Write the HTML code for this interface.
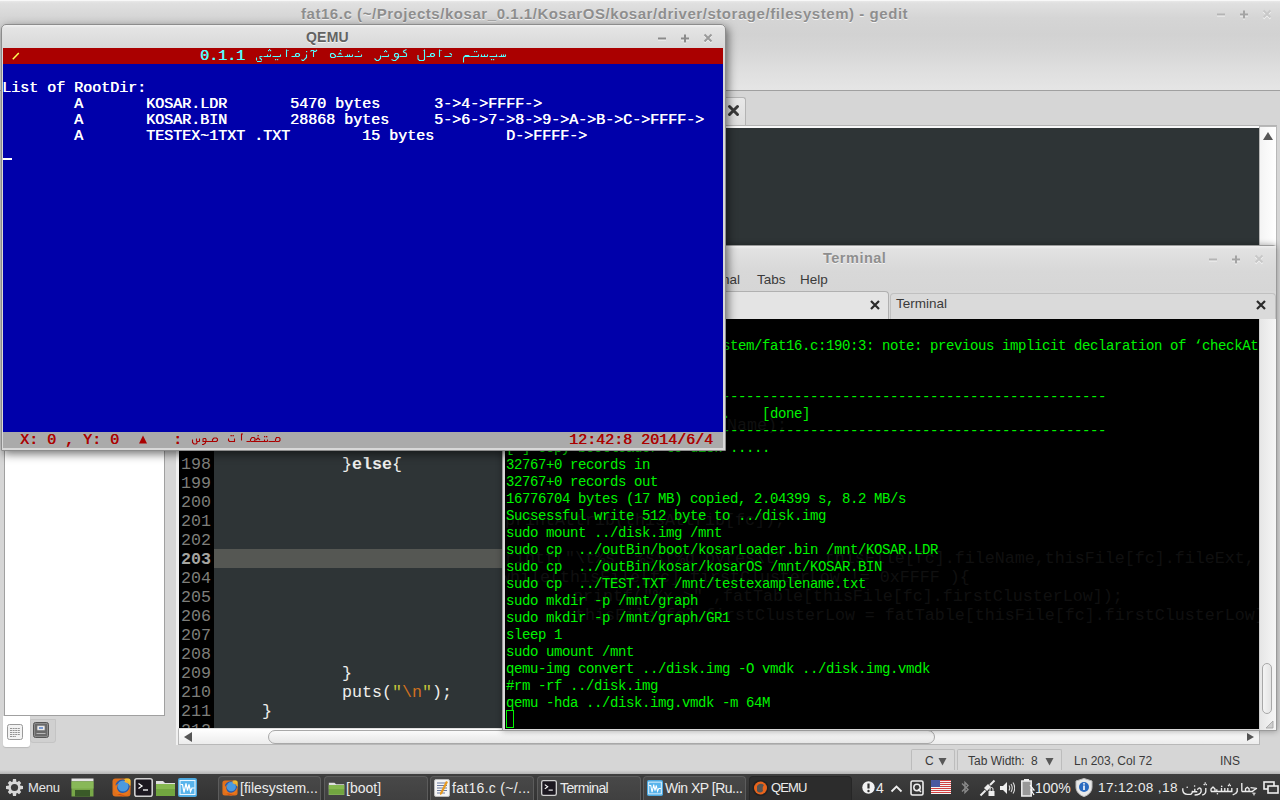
<!DOCTYPE html>
<html><head><meta charset="utf-8">
<style>
*{margin:0;padding:0;box-sizing:border-box}
html,body{width:1280px;height:800px;overflow:hidden;background:#d6d6d6;font-family:"Liberation Sans",sans-serif}
.a{position:absolute}
.mono{font-family:"Liberation Mono",monospace}
/* gedit */
#gtitle{left:0;top:0;width:1280px;height:91px;background:linear-gradient(#ededed 0px,#e0e0e0 3px,#d5d5d5 18px,#d2d2d2 34px,#d6d6d6 50px,#dedede 68px,#e5e5e5 89px);border-bottom:1px solid #a0a0a0}
#gtitletxt{left:301px;top:5px;font-weight:bold;font-size:15px;letter-spacing:0.55px;color:#8e8e8e;white-space:nowrap;text-shadow:0 1px 0 #f4f4f4}
.wc{color:#a8a8a8;font-size:15px;font-weight:bold}
#tabbar{left:0;top:91px;width:1280px;height:36px;background:#d6d6d6}
#gtab{left:600px;top:97px;width:146px;height:31px;background:linear-gradient(#e8e8e8,#dcdcdc);border:1px solid #b4b4b4;border-bottom:none;border-radius:3px 3px 0 0}
#editor{left:178px;top:126px;width:1082px;height:602px;background:#2e3436;overflow:hidden;border-top:2px solid #f8f8f8;border-left:1px solid #f0f0f0}
#gutter{left:0;top:0;width:35px;height:602px;background:#000}
.ln{position:absolute;left:0;width:32px;text-align:right;font-family:"Liberation Mono",monospace;font-size:16.67px;line-height:19px;height:19px;color:#7e7e7a}
.ln.cur{font-weight:bold;color:#a4a4a0}
#curline{left:35px;top:421px;width:1050px;height:19px;background:#555753}
.cl{position:absolute;font-family:"Liberation Mono",monospace;font-size:16.67px;line-height:19px;height:19px;color:#eeeeec;white-space:pre}
#vscroll{left:1259px;top:126px;width:18px;height:603px;background:linear-gradient(90deg,#f4f4f4,#ffffff);border:1px solid #b8b8b8}
#hscroll{left:178px;top:728px;width:1082px;height:17px;background:linear-gradient(#ffffff,#ececec);border:1px solid #b8b8b8;border-top:1px solid #e0e0e0}
#hthumb{left:89px;top:1px;width:667px;height:14px;border:1px solid #a8a8a8;border-radius:7px;background:linear-gradient(#fafafa,#e6e6e6)}
#status{left:0;top:745px;width:1280px;height:28px;background:#d6d6d6}
.sbox{position:absolute;top:749px;height:24px;border:1px solid #bcbcbc;border-bottom:none;background:#d8d8d8;border-radius:2px 2px 0 0}
.stxt{position:absolute;top:754px;font-size:12px;color:#3a3a3a;white-space:nowrap}
#side{left:4px;top:40px;width:161px;height:676px;background:#fff;border:1px solid #a0a0a0}
#sidesep{left:176px;top:451px;width:2px;height:294px;background:#f0f0f0}
/* taskbar */
#taskbar{left:0;top:774px;width:1280px;height:26px;background:linear-gradient(#3e3e3e 0,#3c3c3c 4px,#333 100%);color:#e8e8e8;font-size:13.5px}

/* terminal */
#term{left:502px;top:245px;width:775px;height:486px;background:#d8d8d8;border:1px solid #9a9a9a;border-radius:4px 4px 0 0;box-shadow:0 0 6px rgba(0,0,0,.35)}
#ttitle{left:0;top:0;width:773px;height:25px;background:linear-gradient(#f0f0f0 0,#e2e2e2 3px,#d8d8d8 25px)}
#tmenu{left:0;top:25px;width:773px;height:20px;background:linear-gradient(#d8d8d8,#d6d6d6)}
.mi{position:absolute;top:26px;font-size:13.5px;color:#3a3a3a;white-space:nowrap}
#ttabs{left:0;top:45px;width:773px;height:29px;background:#d8d8d8}
#tcontent{left:2px;top:73px;width:754px;height:410px;background:#000;overflow:hidden}
.gl{position:absolute;font-family:"Liberation Mono",monospace;font-size:16.67px;line-height:19px;height:19px;color:#101010;white-space:pre}
.tl{position:absolute;left:1px;height:17px;line-height:17px;padding-top:2px;font-family:"Liberation Mono",monospace;font-size:14px;letter-spacing:-0.4px;color:#00f400;white-space:pre}
#tscroll{left:756px;top:73px;width:17px;height:411px;background:linear-gradient(90deg,#e6e6e6,#f6f6f6);border-left:1px solid #d0d0d0}
/* qemu */
#qemu{left:1px;top:24px;width:725px;height:427px;background:linear-gradient(#f2f2f2 0,#e4e4e4 3px,#d8d8d8 23px);border:1px solid #8c8c8c;border-radius:5px 5px 0 0;box-shadow:2px 3px 10px rgba(0,0,0,.55)}
#qtitle{left:304px;top:4px;font-weight:bold;font-size:14px;letter-spacing:0.2px;color:#626262;text-shadow:0 1px 0 #f4f4f4}
#qscreen{left:1px;top:23px;width:720px;height:400px;background:#0000aa;overflow:hidden}
.ql{position:absolute;left:0;height:16px;line-height:16px;transform:translate(-1px,1px);font-family:"Liberation Mono",monospace;font-weight:normal;font-size:15px;color:#fff;white-space:pre;text-shadow:0.5px 0 0 currentColor}

.tb{position:absolute;top:776px;height:24px;border:1px solid #5c5c5c;border-bottom:none;border-radius:4px 4px 0 0;background:linear-gradient(#484848,#404040)}
.tbt{position:absolute;top:780px;font-size:14px;color:#ececec;white-space:nowrap}
</style></head>
<body>
<!-- GEDIT -->
<div id="gtitle" class="a"></div>
<div class="a" style="left:0;top:0;width:1280px;height:1px;background:#f8f8f8"></div>
<div id="gtitletxt" class="a">fat16.c (~/Projects/kosar_0.1.1/KosarOS/kosar/driver/storage/filesystem) - gedit</div>
<svg class="a" style="left:1213px;top:6px" width="64" height="16" viewBox="0 0 64 16"><g stroke="#f4f4f4" stroke-width="2" fill="none" transform="translate(0,1)"><path d="M4 8.5h8"/><path d="M27 8.5h8M31 4.5v8"/><path d="M50.5 4.5l7 7M57.5 4.5l-7 7"/></g><g stroke-width="2" fill="none"><path d="M4 8.5h8" stroke="#b4b4b4"/><path d="M27 8.5h8M31 4.5v8" stroke="#a4a4a4"/><path d="M50.5 4.5l7 7M57.5 4.5l-7 7" stroke="#c8c8c8"/></g></svg>
<div id="tabbar" class="a"></div>
<div id="gtab" class="a"></div>
<svg class="a" style="left:727px;top:104px" width="13" height="13" viewBox="0 0 13 13"><path d="M2.5 2.5l8 8M10.5 2.5l-8 8" stroke="#3a3a3a" stroke-width="3" stroke-linecap="round"/></svg>
<div id="side" class="a"></div>
<div id="sidesep" class="a"></div>
<div class="a" style="left:178px;top:125px;width:1099px;height:1px;background:#b4b4b4"></div>
<div id="editor" class="a">
 <div id="gutter" class="a">
<div class="ln" style="top:308px">197</div>
<div class="ln" style="top:327px">198</div>
<div class="ln" style="top:346px">199</div>
<div class="ln" style="top:365px">200</div>
<div class="ln" style="top:384px">201</div>
<div class="ln" style="top:403px">202</div>
<div class="ln cur" style="top:422px">203</div>
<div class="ln" style="top:441px">204</div>
<div class="ln" style="top:460px">205</div>
<div class="ln" style="top:479px">206</div>
<div class="ln" style="top:498px">207</div>
<div class="ln" style="top:517px">208</div>
<div class="ln" style="top:536px">209</div>
<div class="ln" style="top:555px">210</div>
<div class="ln" style="top:574px">211</div>
<div class="ln" style="top:593px">212</div>
 </div>
 <div id="curline" class="a"></div>
 <div class="cl" style="left:163px;top:327px">}<b>else</b>{</div>
 <div class="cl" style="left:163px;top:536px">}</div>
 <div class="cl" style="left:163px;top:555px">puts(<span style="color:#c4c43a">"</span><span style="color:#ce7020">\n</span><span style="color:#c4c43a">"</span>);</div>
 <div class="cl" style="left:83px;top:574px">}</div>
</div>
<div id="vscroll" class="a"></div>
<svg class="a" style="left:1262px;top:130px" width="12" height="12" viewBox="0 0 12 12"><path d="M1 10h10L6 2z" fill="#555"/></svg>
<div id="hscroll" class="a"><div id="hthumb" class="a"></div></div>
<svg class="a" style="left:182px;top:731px" width="12" height="12" viewBox="0 0 12 12"><path d="M10 1v10L2 6z" fill="#555"/></svg>
<svg class="a" style="left:1246px;top:732px" width="10" height="10" viewBox="0 0 10 10"><path d="M1 1v8l7-4z" fill="#555"/></svg>
<div id="status" class="a"></div>
<div class="sbox" style="left:911px;width:44px"></div>
<div class="sbox" style="left:957px;width:105px"></div>
<div class="stxt" style="left:925px">C</div>
<svg class="a" style="left:938px;top:757px" width="9" height="9" viewBox="0 0 9 9"><path d="M0.5 1h8L4.5 8.5z" fill="#585858"/></svg>
<div class="stxt" style="left:968px">Tab Width:</div><div class="stxt" style="left:1031px">8</div>
<svg class="a" style="left:1045px;top:757px" width="9" height="9" viewBox="0 0 9 9"><path d="M0.5 1h8L4.5 8.5z" fill="#585858"/></svg>
<div class="stxt" style="left:1074px">Ln 203, Col 72</div>
<div class="stxt" style="left:1220px">INS</div>
<!-- side panel tabs -->
<div class="a" style="left:3px;top:716px;width:27px;height:31px;background:#fff;border-radius:0 0 3px 3px;box-shadow:0 1px 1px #bbb"></div>
<div class="a" style="left:30px;top:719px;width:26px;height:24px;background:#d0d0d0;border:1px solid #c4c4c4;border-radius:0 0 3px 3px"></div>
<svg class="a" style="left:6px;top:723px" width="20" height="18" viewBox="0 0 20 18"><rect x="1.5" y="1.5" width="15" height="15" rx="2" fill="#f2f2f2" stroke="#9a9a9a"/><path d="M4 5.5h10M4 7.5h10M4 9.5h10M4 11.5h10M4 13.5h6" stroke="#6a6a6a" stroke-width="0.7" stroke-dasharray="2 0.6"/></svg>
<svg class="a" style="left:32px;top:721px" width="18" height="18" viewBox="0 0 18 18"><rect x="1.5" y="1.5" width="15" height="15" rx="2" fill="#8a8a8a" stroke="#555"/><rect x="3" y="3" width="12" height="12" fill="#6a6a6a"/><rect x="5" y="4.5" width="8" height="5" rx="1" fill="#e8e8e8" stroke="#777" stroke-width="0.6"/><rect x="7" y="6" width="4" height="2" fill="#7a9ad0"/><path d="M4.5 12.5h9" stroke="#ccc" stroke-width="0.8"/></svg>


<!-- TERMINAL -->
<div id="term" class="a">
 <div id="ttitle" class="a"></div>
 <div class="a" style="left:320px;top:4px;font-weight:bold;font-size:14.5px;letter-spacing:0.5px;color:#8e8e8e;text-shadow:0 1px 0 #f4f4f4">Terminal</div>
 <svg class="a" style="left:702px;top:5px" width="64" height="16" viewBox="0 0 64 16"><g stroke="#f4f4f4" stroke-width="2" fill="none" transform="translate(0,1)"><path d="M4 8.5h8"/><path d="M27 8.5h8M31 4.5v8"/><path d="M50.5 4.5l7 7M57.5 4.5l-7 7"/></g><g stroke-width="2" fill="none"><path d="M4 8.5h8" stroke="#b4b4b4"/><path d="M27 8.5h8M31 4.5v8" stroke="#a4a4a4"/><path d="M50.5 4.5l7 7M57.5 4.5l-7 7" stroke="#c8c8c8"/></g></svg>
 <div id="tmenu" class="a"></div>
 <div class="mi" style="left:10px">File</div>
 <div class="mi" style="left:50px">Edit</div>
 <div class="mi" style="left:90px">View</div>
 <div class="mi" style="left:135px">Search</div>
 <div class="mi" style="left:186px">Terminal</div>
 <div class="mi" style="left:254px">Tabs</div>
 <div class="mi" style="left:297px">Help</div>
 <div id="ttabs" class="a"></div>
 <div class="a" style="left:4px;top:45px;width:382px;height:29px;background:#e4e4e4;border:1px solid #b0b0b0;border-bottom:none;border-radius:4px 4px 0 0"></div>
 <div class="a" style="left:387px;top:47px;width:386px;height:27px;background:#dadada;border:1px solid #c0c0c0;border-bottom:none;border-radius:4px 4px 0 0"></div>
 <div class="a" style="left:393px;top:50px;font-size:13.5px;color:#3a3a3a">Terminal</div>
 <svg class="a" style="left:366px;top:53px" width="12" height="12" viewBox="0 0 12 12"><path d="M2 2l8 8M10 2l-8 8" stroke="#2a2a2a" stroke-width="2.2"/></svg>
 <svg class="a" style="left:752px;top:53px" width="12" height="12" viewBox="0 0 12 12"><path d="M2 2l8 8M10 2l-8 8" stroke="#2a2a2a" stroke-width="2.2"/></svg>
 <div id="tcontent" class="a">
<div class="gl" style="left:182px;top:97px">fileName);</div>
<div class="gl" style="left:0px;top:192px">printAttrib(thisAttrib[fc]);</div>
<div class="gl" style="left:-10px;top:230px">printf(&quot;\t%s  %s\t%d bytes\t&quot;,   thisFile[fc].fileName,thisFile[fc].fileExt,</div>
<div class="gl" style="left:-5px;top:249px">while(thisFile[fc].firstClusterLow != 0xFFFF ){</div>
<div class="gl" style="left:68px;top:268px">printf(&quot;%x-&gt;&quot; ,fatTable[thisFile[fc].firstClusterLow]);</div>
<div class="gl" style="left:70px;top:287px">thisFile[fc].firstClusterLow = fatTable[thisFile[fc].firstClusterLow];</div>
<div class="tl" style="top:17px">                           stem/fat16.c:190:3: note: previous implicit declaration of ‘checkAt</div>
<div class="tl" style="top:68px">---------------------------------------------------------------------------</div>
<div class="tl" style="top:85px">                           .    [done]</div>
<div class="tl" style="top:102px">---------------------------------------------------------------------------</div>
<div class="tl" style="top:119px">[*] Copy bootloader to disk .....</div>
<div class="tl" style="top:136px">32767+0 records in</div>
<div class="tl" style="top:153px">32767+0 records out</div>
<div class="tl" style="top:170px">16776704 bytes (17 MB) copied, 2.04399 s, 8.2 MB/s</div>
<div class="tl" style="top:187px">Sucsessful write 512 byte to ../disk.img</div>
<div class="tl" style="top:204px">sudo mount ../disk.img /mnt</div>
<div class="tl" style="top:221px">sudo cp  ../outBin/boot/kosarLoader.bin /mnt/KOSAR.LDR</div>
<div class="tl" style="top:238px">sudo cp  ../outBin/kosar/kosarOS /mnt/KOSAR.BIN</div>
<div class="tl" style="top:255px">sudo cp  ../TEST.TXT /mnt/testexamplename.txt</div>
<div class="tl" style="top:272px">sudo mkdir -p /mnt/graph</div>
<div class="tl" style="top:289px">sudo mkdir -p /mnt/graph/GR1</div>
<div class="tl" style="top:306px">sleep 1</div>
<div class="tl" style="top:323px">sudo umount /mnt</div>
<div class="tl" style="top:340px">qemu-img convert ../disk.img -O vmdk ../disk.img.vmdk</div>
<div class="tl" style="top:357px">#rm -rf ../disk.img</div>
<div class="tl" style="top:374px">qemu -hda ../disk.img.vmdk -m 64M</div>
 <div class="a" style="left:1px;top:391px;width:8px;height:18px;border:1px solid #00f400"></div>
 </div>
 <div id="tscroll" class="a"></div>
 <div class="a" style="left:759px;top:417px;width:10px;height:51px;border:1px solid #a8a8a8;border-radius:5px;background:linear-gradient(90deg,#f4f4f4,#e4e4e4)"></div>
 <svg class="a" style="left:762px;top:474px" width="9" height="9" viewBox="0 0 9 9"><path d="M8 1v7H1z" fill="#cfcfcf" stroke="#a0a0a0" stroke-width="0.8"/></svg>
</div>

<!-- QEMU -->
<div id="qemu" class="a">
 <div id="qtitle" class="a">QEMU</div>
 <svg class="a" style="left:652px;top:5px" width="64" height="16" viewBox="0 0 64 16"><g stroke="#f4f4f4" stroke-width="2" fill="none" transform="translate(0,1)"><path d="M4 8.5h8"/><path d="M27 8.5h8M31 4.5v8"/><path d="M50.5 4.5l7 7M57.5 4.5l-7 7"/></g><g stroke-width="2" fill="none"><path d="M4 8.5h8" stroke="#8a8a8a"/><path d="M27 8.5h8M31 4.5v8" stroke="#8a8a8a"/><path d="M50.5 4.5l7 7M57.5 4.5l-7 7" stroke="#9a9a9a"/></g></svg>
 <div id="qscreen" class="a">
  <div class="a" style="left:0;top:0;width:720px;height:16px;background:#aa0000"></div>
  <svg class="a" style="left:9px;top:0" width="9" height="16" viewBox="0 0 9 16"><path d="M0.8 11.2L6.8 5" stroke="#ffff55" stroke-width="1.5"/></svg>
  <div class="ql" style="left:198px;top:0;color:#55ffff">0.1.1</div>
<div class="ql" style="top:32px">List of RootDir:</div>
<div class="ql" style="top:48px">        A       KOSAR.LDR       5470 bytes      3-&gt;4-&gt;FFFF-&gt;</div>
<div class="ql" style="top:64px">        A       KOSAR.BIN       28868 bytes     5-&gt;6-&gt;7-&gt;8-&gt;9-&gt;A-&gt;B-&gt;C-&gt;FFFF-&gt;</div>
<div class="ql" style="top:80px">        A       TESTEX~1TXT .TXT        15 bytes        D-&gt;FFFF-&gt;</div>
  <div class="a" style="left:0;top:110px;width:9px;height:2px;background:#fff"></div>
  <div class="a" style="left:0;top:384px;width:720px;height:16px;background:#aaaaaa"></div>
  <div class="ql" style="left:0;top:384px;color:#aa0000">  X: 0 , Y: 0                                                  12:42:8 2014/6/4</div>
  <svg class="a" style="left:135px;top:384px" width="18" height="16" viewBox="0 0 18 16"><path d="M1 11.5h8L5 3.5z" fill="#aa0000"/></svg>
  <div class="ql" style="left:171px;top:384px;color:#aa0000">:</div>
 </div>
</div>

<div class="a" style="left:0;top:770px;width:1280px;height:4px;background:linear-gradient(#d6d6d6,#b4b4b4)"></div>
<div id="taskbar" class="a"></div>

<!-- PERSIAN -->
<svg class="a" style="left:0;top:48px" width="520" height="16" viewBox="0 0 520 16"><path d="M256.5 9.5v3 M257 13.5h4.5 M261.5 12.5v-1 l-2-2 M259.5 8.5h3 M263.5 8.5h7 M267.5 6.5v2 M270.5 6.5v2 M272.5 8.5h8 M280.5 6.5v2 M286.5 1.5v7.5 M287.5 2.5h1 M291.5 8.5h4 M295.5 6.5l1-1h2l1 1v1l-1 1h-2l-1-1z M306.5 6.5v3l-3 3h-1l-1-1 M313.5 3.5v5.5 M310.5 3.5l1-1h2l1 1h1l1.5-1.5 M330.5 5.5v3l1 1h3l1-1v-1l-2-2h-2l-1 1 M336.5 8.5h7 M338.5 6.5l1.5-1.5 1.5 1.5 M344.5 8.5h8 M347.5 6.5v2 M349.5 6.5v2 M352.5 6.5v2 M354.5 8.5h7 M361.5 6.5v2 M380.5 7.5v3l-2 2h-2l-2-2 M381.5 8.5h7 M388.5 6.5v2 M394.5 6.5l1-1h2l1 1v1.5l-1 1h-2l-1-1z M398.5 8.5v1l-3 3h-2l-2-1 M399.5 8.5h7 M406.5 5.5v3 M406.5 1.5l-3 1.5v1l3 1.5 M424.5 1.5v10l-1 1h-4l-1.5-1.5v-4 M423.5 2.5h1 M426.5 8.5h4 M430.5 6.5l1-1h2l1 1v1l-1 1h-2l-1-1z M439.5 1.5v7.5 M440.5 2.5h1 M444.5 8.5h3 M444.5 8.5h7 M451.5 7.5v-1l-1-1h-1 M463.5 9.5v5 M463.5 9.5l2-2h3l1 1h-5 M470.5 8.5h8 M478.5 6.5v2 M480.5 8.5h7 M481.5 6.5v2 M484.5 6.5v2 M487.5 6.5v2 M489.5 8.5h8 M496.5 6.5v2 M498.5 8.5h7 M501.5 6.5v2 M503.5 6.5v2 M505.5 6.5v2" stroke="#55ffff" stroke-width="1.1" fill="none"/><g fill="#55ffff"><rect x="268" y="2" width="1.2" height="1.2"/><rect x="269" y="1" width="1.2" height="1.2"/><rect x="270" y="2" width="1.2" height="1.2"/><rect x="275" y="11" width="1.2" height="1.2"/><rect x="277" y="11" width="1.2" height="1.2"/><rect x="306" y="3" width="1.2" height="1.2"/><rect x="340" y="2" width="1.2" height="1.2"/><rect x="358" y="3" width="1.2" height="1.2"/><rect x="384" y="3" width="1.2" height="1.2"/><rect x="385" y="2" width="1.2" height="1.2"/><rect x="386" y="3" width="1.2" height="1.2"/><rect x="474" y="3" width="1.2" height="1.2"/><rect x="476" y="3" width="1.2" height="1.2"/><rect x="491" y="11" width="1.2" height="1.2"/><rect x="493" y="11" width="1.2" height="1.2"/></g></svg>
<svg class="a" style="left:0;top:0" width="300" height="460" viewBox="0 0 300 460"><path d="M192.5 439.5v3l1.5 1.5h2l1-1v-2 M196.5 438.5v3 M197 441.5h2.5 M199.5 438.5v3 M203 439l1-0.5h1.5l0.5 1v2h-3z M205.5 441.5v1.5l-2 1.5h-1.5 M206.5 441.5h6 M212.5 441.5v-2l1.5-1.5h2.5l1 1v1.5l-1 1h-4 M228.5 438.5v2l1 1h5v-3 M241.5 433.5v7 M242 434h1 M246.5 441.5h4 M250.5 441.5v-2l1.5-2h2l1 1v2l-1 1h-3 M254.5 441.5h7 M256 440l2-2 2 2 M261.5 441.5h6 M264.5 439.5v2 M267.5 439.5v2 M268.5 441.5h7 M275.5 441.5v-2l1-2h2.5l1 1v2l-1 1h-3" stroke="#aa0000" stroke-width="1.1" fill="none"/><g fill="#aa0000"><rect x="230.5" y="435" width="1.3" height="1.3"/><rect x="232.5" y="435" width="1.3" height="1.3"/><rect x="257.5" y="435" width="1.3" height="1.3"/><rect x="264" y="436" width="1.3" height="1.3"/><rect x="266" y="436" width="1.3" height="1.3"/></g></svg>
<!-- TASKBAR CONTENT -->
<svg class="a" style="left:5px;top:778px" width="19" height="19" viewBox="0 0 19 19">
 <g fill="#d8d8d8"><circle cx="9.5" cy="9.5" r="6"/>
 <path d="M8 1h3l.5 3h-4zM8 18h3l.5-3h-4zM1 8v3l3 .5v-4zM18 8v3l-3 .5v-4z"/>
 <path d="M2.8 4.9l2.1-2.1 2.5 1.8-2.8 2.8zM16.2 14.1l-2.1 2.1-2.5-1.8 2.8-2.8zM4.9 16.2l-2.1-2.1 1.8-2.5 2.8 2.8zM14.1 2.8l2.1 2.1-1.8 2.5-2.8-2.8z"/></g>
 <circle cx="9.5" cy="9.5" r="3.6" fill="#3c3c3c"/>
</svg>
<div class="tbt" style="left:28px;color:#e6e6e6;font-size:13px;letter-spacing:-0.2px">Menu</div>
<svg class="a" style="left:71px;top:778px" width="23" height="19" viewBox="0 0 23 19">
 <rect x="0.5" y="0.5" width="22" height="3" fill="#e4e4e4"/>
 <rect x="0.5" y="3.5" width="22" height="15" fill="#78a848"/>
 <rect x="0.5" y="3.5" width="22" height="7" fill="#88b858"/>
 <rect x="4" y="12" width="15" height="6.5" fill="#3a5a28"/>
</svg>
<svg class="a" style="left:112px;top:778px" width="19" height="19" viewBox="0 0 19 19">
 <rect x="0.5" y="0.5" width="18" height="18" rx="3" fill="#e0701c"/><rect x="12" y="0.5" width="6.5" height="8" rx="2" fill="#f0c030"/>
 <circle cx="10.5" cy="9" r="7.5" fill="#2a5aa8"/>
 <circle cx="11" cy="8" r="5.5" fill="#4a9ae0"/>
 <path d="M2 4 Q0 12 5 16 Q10 20 15 17 Q19 13 18 8 Q17 14 11 15 Q6 15 5 10 Q5 7 7 6 Q4 6 4 8 Q3 6 2 4z" fill="#e8761c"/>
 <path d="M5 16 Q10 19 15 17 Q11 17.5 8 16z" fill="#d04a10"/>
 <path d="M13 1.5 Q17 3 18.5 8 Q16 4.5 12.5 4z" fill="#f8b030"/>
</svg>
<svg class="a" style="left:134px;top:778px" width="19" height="19" viewBox="0 0 19 19">
 <rect x="0.8" y="0.8" width="17.4" height="17.4" rx="2" fill="#1c1820" stroke="#d0d0d0" stroke-width="1.6"/>
 <path d="M4.5 5.5l3.5 2.5-3.5 2.5" stroke="#fff" stroke-width="1.3" fill="none"/><path d="M9 12h5" stroke="#fff" stroke-width="1.3"/>
</svg>
<svg class="a" style="left:155px;top:778px" width="21" height="19" viewBox="0 0 21 19">
 <path d="M1 3h7l2 2h10v13H1z" fill="#e0e0e0"/>
 <path d="M1 6h19v12H1z" fill="#72a640"/><path d="M1 6h19v5H1z" fill="#86b850"/>
</svg>
<svg class="a" style="left:178px;top:778px" width="19" height="19" viewBox="0 0 19 19">
 <rect x="0" y="0" width="19" height="19" rx="2" fill="#4aa8e0"/>
 <rect x="2" y="2.5" width="15" height="14" fill="#58b4ec" stroke="#eaf6ff" stroke-width="1.1"/>
 <path d="M2.5 6.5h2l1.5 8 2-9 1.5 7 1.5-6 1.5 7 1.5-3.5h2.5" stroke="#fff" stroke-width="1.2" fill="none"/>
</svg>

<div class="tb" style="left:218px;width:103px"></div>
<div class="tb" style="left:324px;width:104px"></div>
<div class="tb" style="left:430px;width:104px"></div>
<div class="tb" style="left:537px;width:104px"></div>
<div class="tb" style="left:643px;width:103px"></div>
<div class="tb" style="left:749px;width:103px;background:#2c2c2c;border-color:#262626"></div>

<svg class="a" style="left:222px;top:780px" width="16" height="16" viewBox="0 0 19 19">
 <rect x="0.5" y="0.5" width="18" height="18" rx="3" fill="#e0701c"/><rect x="12" y="0.5" width="6.5" height="8" rx="2" fill="#f0c030"/>
 <circle cx="10.5" cy="9" r="7.5" fill="#2a5aa8"/>
 <circle cx="11" cy="8" r="5.5" fill="#4a9ae0"/>
 <path d="M2 4 Q0 12 5 16 Q10 20 15 17 Q19 13 18 8 Q17 14 11 15 Q6 15 5 10 Q5 7 7 6 Q4 6 4 8 Q3 6 2 4z" fill="#e8761c"/>
 <path d="M5 16 Q10 19 15 17 Q11 17.5 8 16z" fill="#d04a10"/>
 <path d="M13 1.5 Q17 3 18.5 8 Q16 4.5 12.5 4z" fill="#f8b030"/>
</svg>
<div class="tbt" style="left:240px">[filesystem...</div>
<svg class="a" style="left:328px;top:780px" width="17" height="16" viewBox="0 0 21 19">
 <path d="M1 3h7l2 2h10v13H1z" fill="#e0e0e0"/>
 <path d="M1 6h19v12H1z" fill="#72a640"/><path d="M1 6h19v5H1z" fill="#86b850"/>
</svg>
<div class="tbt" style="left:346px">[boot]</div>
<svg class="a" style="left:434px;top:779px" width="16" height="18" viewBox="0 0 16 18">
 <rect x="0.5" y="0.5" width="15" height="17" rx="1.5" fill="#f4f4f4" stroke="#bbb"/>
 <path d="M3 4h10M3 6.5h10M3 9h10M3 11.5h10M3 14h8" stroke="#6a7aa0" stroke-width="1"/>
 <path d="M12 2l2 1-6 12-2 1 0-2z" fill="#e89a20"/>
</svg>
<div class="tbt" style="left:452px;letter-spacing:0.3px">fat16.c (~/...</div>
<svg class="a" style="left:541px;top:780px" width="16" height="16" viewBox="0 0 19 19">
 <rect x="0.8" y="0.8" width="17.4" height="17.4" rx="2" fill="#1c1820" stroke="#d0d0d0" stroke-width="1.6"/>
 <path d="M4.5 5.5l3.5 2.5-3.5 2.5" stroke="#fff" stroke-width="1.3" fill="none"/><path d="M9 12h5" stroke="#fff" stroke-width="1.3"/>
</svg>
<div class="tbt" style="left:560px;letter-spacing:-0.6px">Terminal</div>
<svg class="a" style="left:647px;top:780px" width="16" height="16" viewBox="0 0 19 19">
 <rect x="0" y="0" width="19" height="19" rx="2" fill="#4aa8e0"/>
 <rect x="2" y="2.5" width="15" height="14" fill="#58b4ec" stroke="#eaf6ff" stroke-width="1.1"/>
 <path d="M2.5 6.5h2l1.5 8 2-9 1.5 7 1.5-6 1.5 7 1.5-3.5h2.5" stroke="#fff" stroke-width="1.2" fill="none"/>
</svg>
<div class="tbt" style="left:665px;letter-spacing:-0.5px">Win XP [Ru...</div>
<svg class="a" style="left:752px;top:779px" width="17" height="18" viewBox="0 0 17 18">
 <circle cx="8.5" cy="9" r="8" fill="#222"/>
 <circle cx="8.5" cy="9" r="6.5" fill="#e8641c"/>
 <path d="M5 7 Q8 3 12 6 Q10 8 11 12 Q8 15 5 12z" fill="#555"/>
</svg>
<div class="tbt" style="left:771px;font-size:13px;letter-spacing:-0.9px">QEMU</div>

<!-- tray -->
<svg class="a" style="left:862px;top:781px" width="13" height="13" viewBox="0 0 13 13"><circle cx="6.5" cy="6.5" r="6.2" fill="#f2f2f2"/><path d="M6.5 2.5v5" stroke="#333" stroke-width="2.2"/><circle cx="6.5" cy="10" r="1.2" fill="#333"/></svg>
<div class="tbt" style="left:876px">4</div>
<svg class="a" style="left:890px;top:784px" width="13" height="9" viewBox="0 0 13 9"><path d="M1.5 7.5l5-5 5 5" stroke="#eee" stroke-width="1.8" fill="none"/></svg>
<svg class="a" style="left:910px;top:780px" width="14" height="16" viewBox="0 0 14 16"><rect x="1" y="1" width="12" height="14" rx="1.5" fill="none" stroke="#eee" stroke-width="1.6"/><circle cx="7" cy="7.5" r="3.2" fill="none" stroke="#eee" stroke-width="1.5"/><path d="M8 9l3 3" stroke="#eee" stroke-width="1.5"/></svg>
<svg class="a" style="left:931px;top:780px" width="20" height="14" viewBox="0 0 20 14">
 <rect x="0" y="0" width="20" height="14" fill="#f4f4f4"/>
 <rect x="0" y="0" width="20" height="1" fill="#d04040"/><rect x="0" y="2" width="20" height="1" fill="#d04040"/><rect x="0" y="4" width="20" height="1" fill="#d04040"/><rect x="0" y="6" width="20" height="1" fill="#d04040"/><rect x="0" y="8" width="20" height="1" fill="#d04040"/><rect x="0" y="10" width="20" height="1" fill="#d04040"/><rect x="0" y="12" width="20" height="1" fill="#d04040"/>
 <rect x="0" y="0" width="9" height="7" fill="#4858a0"/>
</svg>
<svg class="a" style="left:960px;top:779px" width="10" height="17" viewBox="0 0 10 17"><path d="M2 4.5l6 6-3 3V3.5l3 3-6 6" stroke="#8a8a8a" stroke-width="1.4" fill="none"/></svg>
<svg class="a" style="left:979px;top:779px" width="17" height="18" viewBox="0 0 17 18"><path d="M1.5 16.5l5-5" stroke="#eee" stroke-width="2"/><path d="M5 9l4-4 3 3-4 4z" fill="#eee"/><path d="M11 6l4.5-4.5" stroke="#eee" stroke-width="2"/><rect x="9.5" y="12" width="6" height="5" fill="#eee"/><path d="M11 12v-2a1.5 1.5 0 0 1 3 0v2" stroke="#eee" fill="none"/></svg>
<svg class="a" style="left:999px;top:781px" width="16" height="14" viewBox="0 0 16 14"><path d="M1 5h3l4-4v12l-4-4H1z" fill="#eee"/><path d="M10 4.5q1.5 2.5 0 5M12 3q2.5 4 0 8M14 1.5q3.5 5.5 0 11" stroke="#ddd" stroke-width="1.1" fill="none"/></svg>
<svg class="a" style="left:1021px;top:779px" width="14" height="18" viewBox="0 0 14 18"><rect x="3" y="0" width="5" height="2" fill="#eee"/><rect x="0.8" y="2" width="9.4" height="15" fill="#999" stroke="#eee" stroke-width="1.5"/><path d="M9 6l4 5-3 0 3 5" stroke="#fff" stroke-width="1.2" fill="none"/></svg>
<div class="tbt" style="left:1035px">100%</div>
<svg class="a" style="left:1075px;top:778px" width="18" height="19" viewBox="0 0 18 19"><path d="M9 0.5L17 3v6c0 5-4 8.5-8 9.5C5 17.5 1 14 1 9V3z" fill="#e8e8e8" stroke="#bbb" stroke-width="1"/><circle cx="9" cy="9" r="5" fill="#2a6ac0"/><path d="M9 7.5v4.5" stroke="#fff" stroke-width="1.6"/><circle cx="9" cy="5.8" r="0.9" fill="#fff"/></svg>
<div class="tbt" style="left:1098px;font-size:13.6px;letter-spacing:0.35px">17:12:08 ,18</div>
<svg class="a" style="left:1263px;top:781px" width="16" height="14" viewBox="0 0 16 14"><rect x="1" y="1" width="10" height="7" fill="none" stroke="#eee" stroke-width="1.6"/><rect x="5" y="5" width="10" height="7" fill="#3a3a3a" stroke="#eee" stroke-width="1.6"/></svg>

<!-- P3 --><svg class="a" style="left:0;top:0" width="1280" height="800" viewBox="0 0 1280 800"><path d="M1211 791.5 h21.5 M1211 791.5 v-2.5 l2-2 l2 2 v2.5 M1216.8 791.5 v-2.2 M1221.5 791.5 v-3.5 M1224.8 791.5 v-3.5 M1227.8 791.5 v-3.5 M1231.8 791.5 v-3.5 M1237.2 788 v3.5 l-1.5 2 l-3 1.3 M1241.8 783 v8.5 M1241.8 791.5 h11.5 M1245.5 791.5 v-2.8 l1.8-1.5 l1.8 1.5 v2.8 M1250.5 787.6 l6 0.8 l-4.5 3.1 M1182.8 788.3 v2.2 q0.8 3.8 4.5 3.8 h3 q2 0 2.2-3.5 M1192.5 791.7 h2.3 v-3 M1194.8 791.7 h2.5 M1197.5 789.8 q0.5-2 2-2 q2 0.2 1.6 3.9 q-1 3-6.5 3.3 M1205.8 788 v3.2 q0 2.8-3.6 3.8" stroke="#ececec" stroke-width="1.35" fill="none" stroke-linejoin="round"/><g fill="#ececec"><circle cx="1217.4" cy="793.8" r="0.8"/><circle cx="1221.7" cy="786.4" r="0.8"/><circle cx="1228.5" cy="785.6" r="0.8"/><circle cx="1230.2" cy="785.6" r="0.8"/><circle cx="1229.4" cy="784.2" r="0.8"/><circle cx="1253.2" cy="793.2" r="0.8"/><circle cx="1254.8" cy="793.2" r="0.8"/><circle cx="1254" cy="794.7" r="0.8"/><circle cx="1187.2" cy="787.2" r="0.8"/><circle cx="1194.6" cy="786" r="0.8"/><circle cx="1204.2" cy="784.6" r="0.8"/><circle cx="1206.2" cy="784.6" r="0.8"/><circle cx="1205.2" cy="783.1" r="0.8"/></g></svg><!-- /P3 -->
</body></html>
